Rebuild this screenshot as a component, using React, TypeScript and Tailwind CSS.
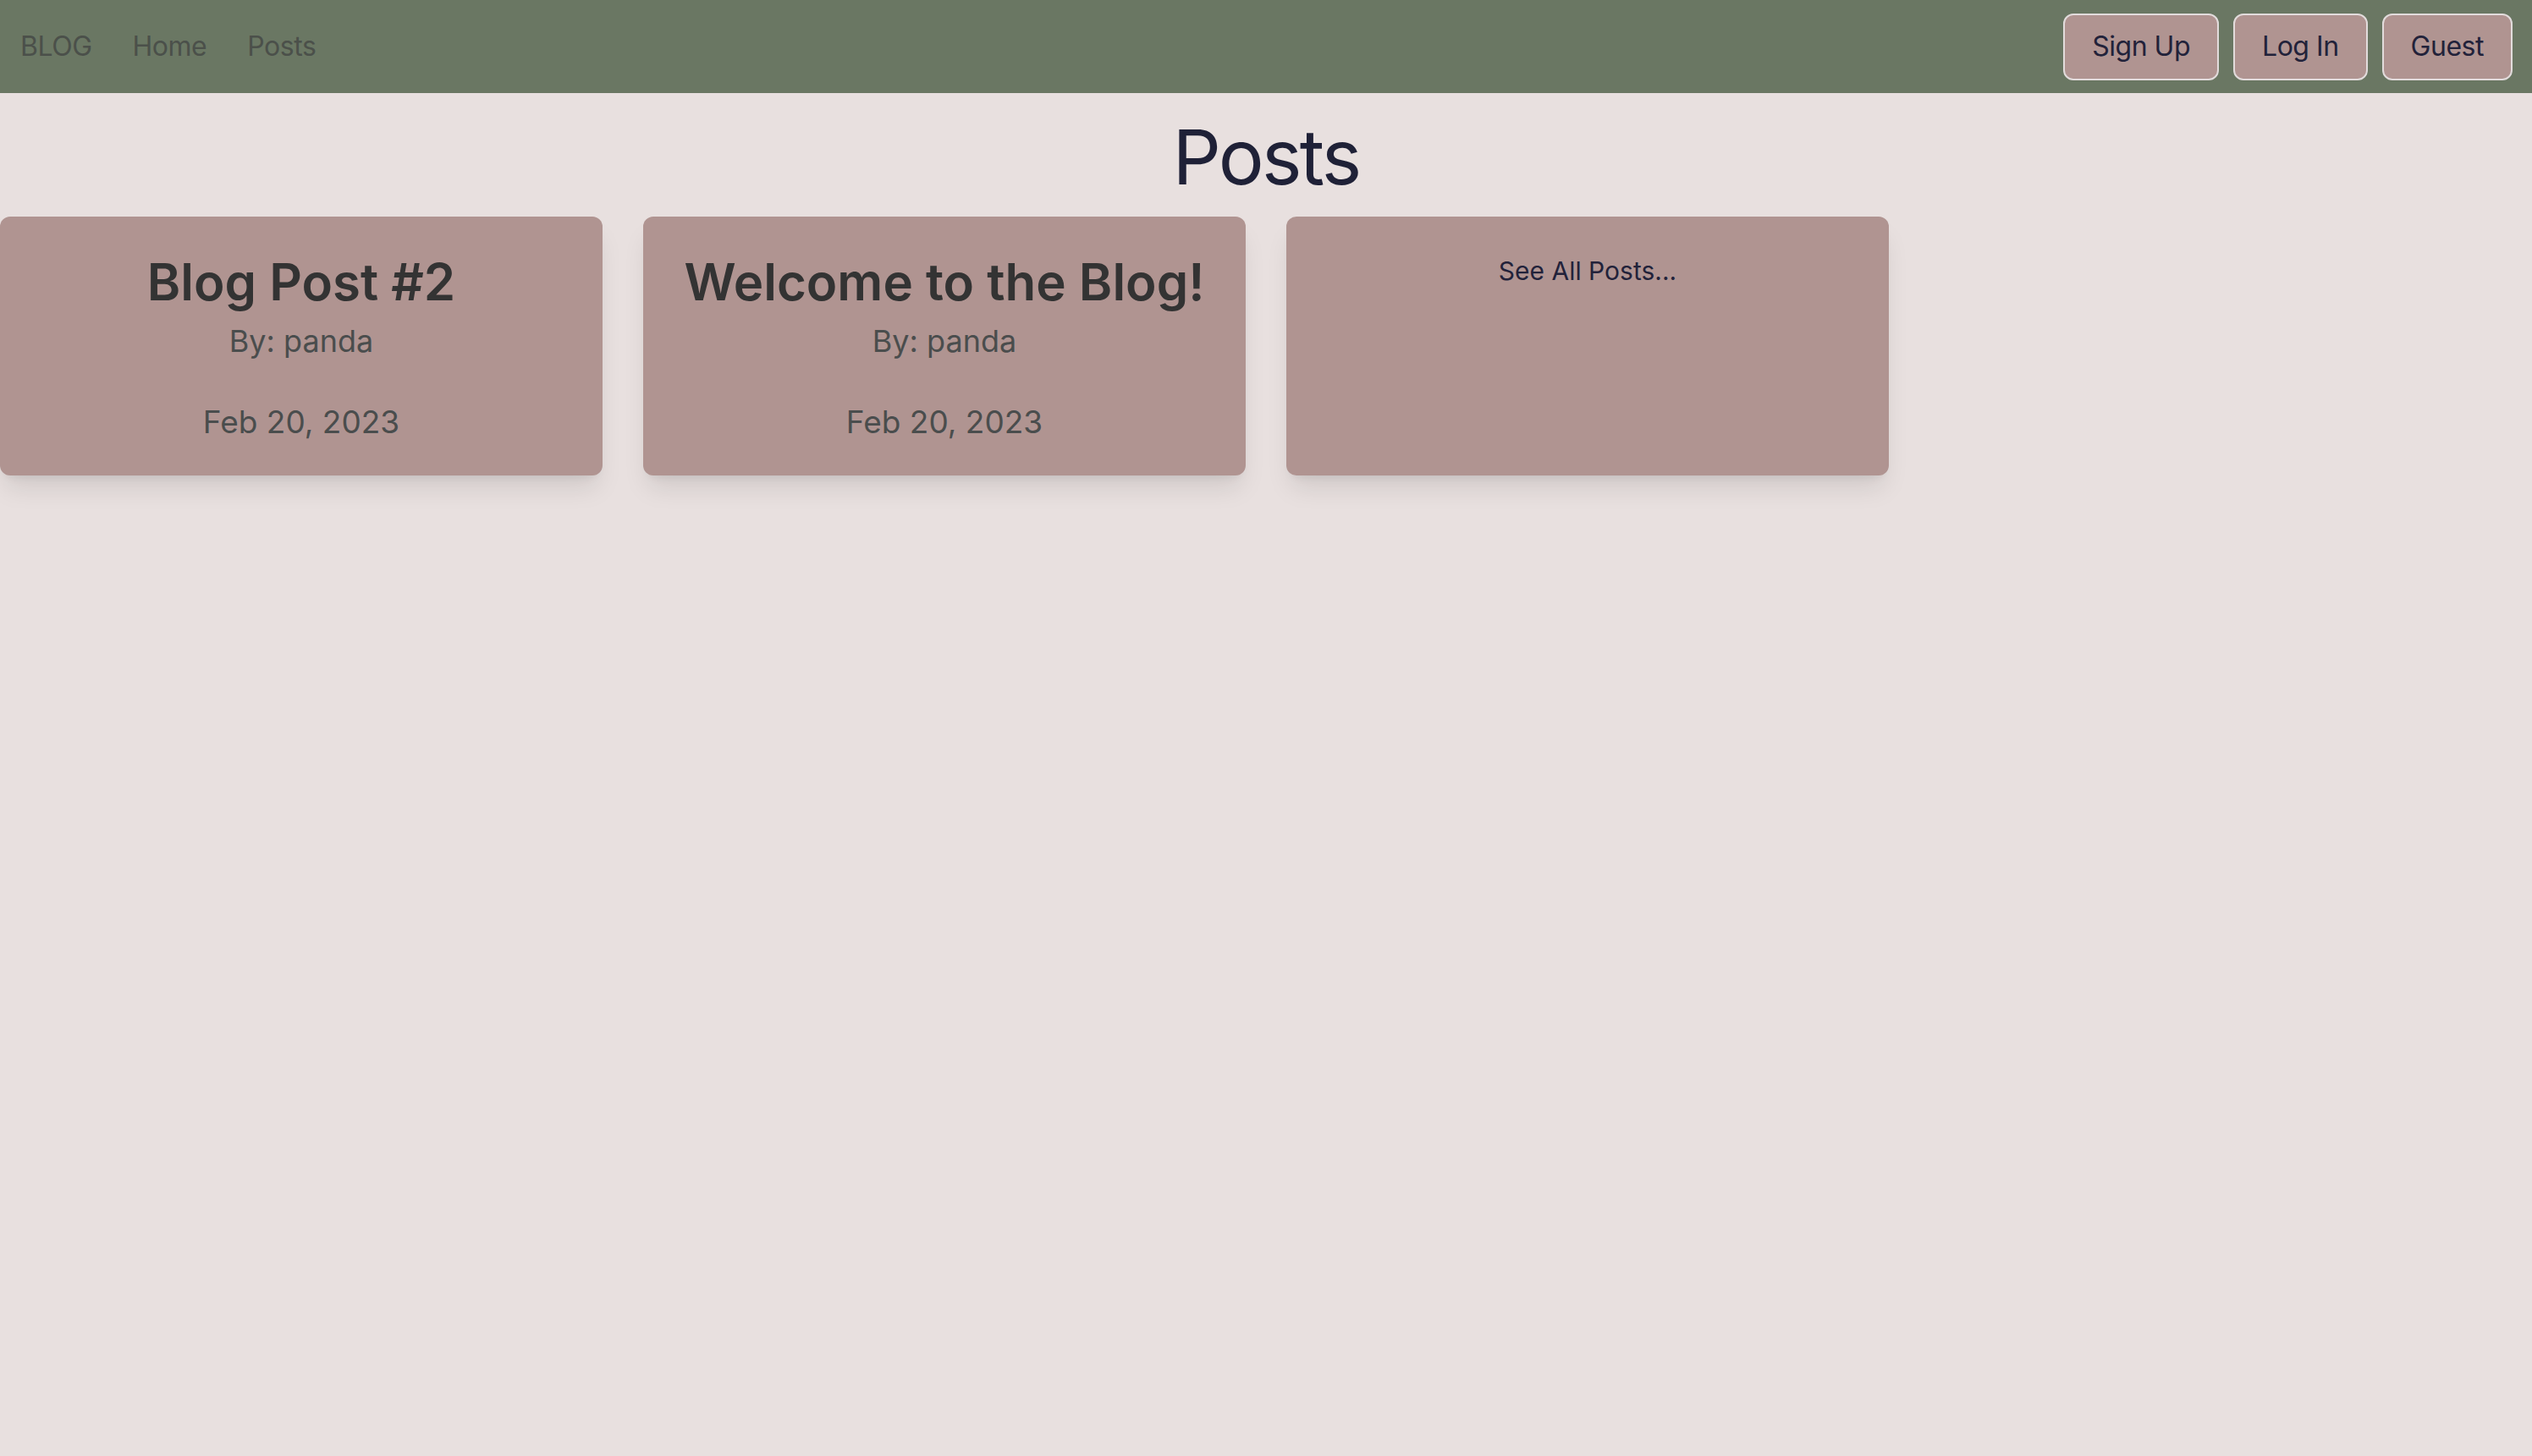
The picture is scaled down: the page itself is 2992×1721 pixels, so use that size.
import { clsx } from 'clsx'

interface Post {
  title: string
  author: string
  date: string
}

const posts: Post[] = [
  { title: 'Blog Post #2', author: 'panda', date: 'Feb 20, 2023' },
  { title: 'Welcome to the Blog!', author: 'panda', date: 'Feb 20, 2023' },
]

const cardClass =
  'w-[712px] h-[306px] shrink-0 rounded-[12px] bg-[#b09491] shadow-[0_20px_30px_-6px_rgba(0,0,0,0.1),0_8px_12px_-8px_rgba(0,0,0,0.1)]'

function NavButton({ label }: { label: string }) {
  return (
    <button
      className={clsx(
        'flex h-[79px] items-center rounded-[12px] border-2 border-[#e2dcdc] bg-[#b09491] px-[32px]',
        'text-[32px] leading-[48px] tracking-[-0.015em] text-[#22223a]'
      )}
    >
      {label}
    </button>
  )
}

function PostCard({ post }: { post: Post }) {
  return (
    <div className={clsx(cardClass, 'flex flex-col items-center pt-[41px] text-center')}>
      <h2 className="text-[60px] font-semibold leading-[72px] text-[#333333]">{post.title}</h2>
      <p className="mt-[10px] text-[36px] leading-[48px] text-[#4a4d4d]">By: {post.author}</p>
      <p className="mt-[44px] text-[37px] leading-[56px] text-[#4a4d4d]">{post.date}</p>
    </div>
  )
}

export default function App() {
  return (
    <div className="min-h-screen bg-[#e8e0df] font-['Inter','Liberation_Sans',sans-serif]">
      <nav className="flex h-[110px] items-center justify-between bg-[#6a7763] pr-[23px]">
        <div className="flex items-center text-[32px] leading-[48px] tracking-[-0.015em] text-[#4b504a]">
          <a className="px-[24px]">BLOG</a>
          <a className="px-[24px]">Home</a>
          <a className="px-[24px]">Posts</a>
        </div>
        <div className="flex items-center gap-[17px]">
          <NavButton label="Sign Up" />
          <NavButton label="Log In" />
          <NavButton label="Guest" />
        </div>
      </nav>

      <main className="pt-[28px]">
        <h1 className="text-center text-[90px] font-normal leading-[96px] tracking-[-0.03em] text-[#1f2137]">
          Posts
        </h1>
        <div className="mt-[22px] flex gap-[48px]">
          {posts.map((post) => (
            <PostCard key={post.title} post={post} />
          ))}
          <div className={clsx(cardClass, 'flex justify-center pt-[40px]')}>
            <a className="text-[30px] leading-[48px] text-[#22223a]">See All Posts...</a>
          </div>
        </div>
      </main>
    </div>
  )
}
